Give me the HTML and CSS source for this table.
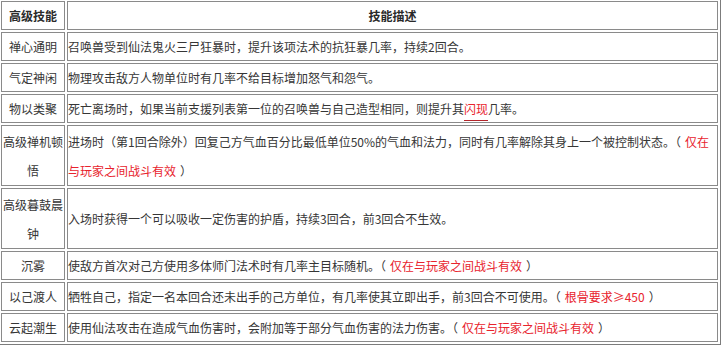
FILE: index.html
```html
<!DOCTYPE html>
<html lang="zh-CN">
<head>
<meta charset="utf-8">
<title>高级技能</title>
<link rel="stylesheet" href="styles.css">
</head>
<body>
<table class="skills">
  <colgroup>
    <col class="col-name">
    <col class="col-desc">
  </colgroup>
  <thead>
    <tr class="single">
      <th>高级技能</th>
      <th>技能描述</th>
    </tr>
  </thead>
  <tbody>
    <tr class="single">
      <td class="name">禅心通明</td>
      <td class="desc">召唤兽受到仙法鬼火三尸狂暴时，提升该项法术的抗狂暴几率，持续2回合。</td>
    </tr>
    <tr class="single">
      <td class="name">气定神闲</td>
      <td class="desc">物理攻击敌方人物单位时有几率不给目标增加怒气和怨气。</td>
    </tr>
    <tr class="single">
      <td class="name">物以类聚</td>
      <td class="desc">死亡离场时，如果当前支援列表第一位的召唤兽与自己造型相同，则提升其<span class="link">闪现</span>几率。</td>
    </tr>
    <tr class="double">
      <td class="name">高级禅机顿悟</td>
      <td class="desc">进场时（第1回合除外）回复己方气血百分比最低单位50%的气血和法力，同时有几率解除其身上一个被控制状态。（<span class="red">仅在<br>与玩家之间战斗有效</span>）</td>
    </tr>
    <tr class="double">
      <td class="name">高级暮鼓晨钟</td>
      <td class="desc">入场时获得一个可以吸收一定伤害的护盾，持续3回合，前3回合不生效。</td>
    </tr>
    <tr class="single">
      <td class="name">沉雾</td>
      <td class="desc">使敌方首次对己方使用多体师门法术时有几率主目标随机。（<span class="red">仅在与玩家之间战斗有效</span>）</td>
    </tr>
    <tr class="single">
      <td class="name">以己渡人</td>
      <td class="desc">牺牲自己，指定一名本回合还未出手的己方单位，有几率使其立即出手，前3回合不可使用。（<span class="red">根骨要求≥450</span>）</td>
    </tr>
    <tr class="single">
      <td class="name">云起潮生</td>
      <td class="desc">使用仙法攻击在造成气血伤害时，会附加等于部分气血伤害的法力伤害。（<span class="red">仅在与玩家之间战斗有效</span>）</td>
    </tr>
  </tbody>
</table>
</body>
</html>
```

FILE: styles.css
```css
html, body {
  margin: 0;
  padding: 0;
  background: #ffffff;
  overflow: hidden;
}

.skills {
  margin: -2px 0 0 -2px;
  width: 723px;
  table-layout: fixed;
  border-collapse: separate;
  border-spacing: 2px;
  border: 1px solid #7c7c7c;
  font-family: "Noto Sans CJK SC", "Microsoft YaHei", sans-serif;
  font-size: 12px;
  color: #363636;
}

.col-name {
  width: 64px;
}

.skills th,
.skills td {
  border: 1px solid #8a8a8a;
  padding: 0;
  vertical-align: middle;
  box-sizing: border-box;
}

.skills th {
  font-weight: bold;
  color: #2a2a2a;
  text-align: center;
}

.single th,
.single td {
  height: 29px;
  line-height: 27px;
}

.double td {
  height: 61px;
  line-height: 29px;
}

.name {
  text-align: center;
}

.desc {
  text-align: left;
  padding-left: 1px;
}

.red {
  color: #e8232d;
  padding: 0 4px;
}

.link {
  color: #e8232d;
  border-bottom: 1px solid #b3262b;
  padding-bottom: 3px;
}
```
